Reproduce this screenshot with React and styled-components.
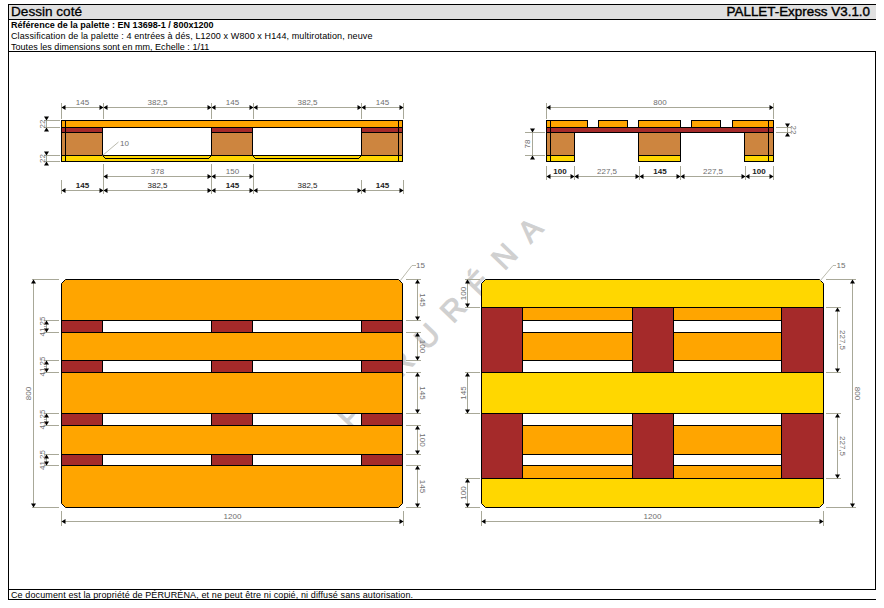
import React from 'react';
import styled, { createGlobalStyle } from 'styled-components';

const GlobalStyle = createGlobalStyle`
  html, body {
    margin: 0;
    padding: 0;
    background: #fff;
  }
`;

const ORANGE = '#ffa500';
const BROWN = '#a52a2a';
const PERU = '#cd853f';
const GOLD = '#ffd700';
const DIM = '#a8a898';

const Page = styled.div`
  width: 868px;
  margin: 4px 0 0 8px;
  font-family: 'Liberation Sans', Arial, sans-serif;
  color: #000;
`;

const TitleBar = styled.header`
  display: flex;
  justify-content: space-between;
  align-items: center;
  height: 14px;
  padding: 0 6px 0 2px;
  background: #e0e0e0;
  border: 1px solid #000;
  border-right: 0;
  line-height: 14px;
`;

const TitleText = styled.span`
  font-size: ${(p) => (p.$right ? '13.4px' : '13.6px')};
  -webkit-text-stroke: ${(p) => (p.$right ? '0.4px' : '0.3px')} #000;
`;

const Info = styled.section`
  display: grid;
  grid-auto-rows: 11px;
  height: 31px;
  padding-left: 2px;
  border-left: 1px solid #000;
  font-size: 9px;
  line-height: 11px;
`;

const InfoRow = styled.div`
  font-weight: ${(p) => (p.$bold ? 700 : 400)};
  letter-spacing: ${(p) => p.$spacing ?? 0}px;
  white-space: nowrap;
`;

const Sheet = styled.main`
  height: 537px;
  border: 1px solid #000;
`;

const Drawing = styled.svg`
  display: block;
  width: 866px;
  height: 537px;
`;

const Footer = styled.footer`
  height: 9px;
  padding-left: 2px;
  border-left: 1px solid #000;
  border-bottom: 1px solid #000;
  font-size: 9px;
  line-height: 10px;
  letter-spacing: 0.115px;
  white-space: nowrap;
`;

const DimLabel = styled.text`
  font-family: 'Liberation Sans', Arial, sans-serif;
  font-size: 8px;
  font-weight: ${(p) => (p.$tone === 'bold' ? 700 : 400)};
  fill: ${(p) => (p.$tone ? '#222' : '#6e6e6e')};
  text-anchor: middle;
  dominant-baseline: central;
`;

const Watermark = styled.text`
  font-family: 'Liberation Sans', Arial, sans-serif;
  font-size: 30px;
  fill: #d0d0d0;
  stroke: #d0d0d0;
  stroke-width: 1;
  letter-spacing: 16px;
  text-anchor: middle;
  dominant-baseline: central;
`;

const Wood = styled.polygon`
  fill: ${(p) => p.$fill};
  stroke: #000;
  stroke-width: 1;
`;

const Piece = styled.rect`
  fill: ${(p) => p.$fill};
  stroke: #000;
  stroke-width: 1;
  shape-rendering: crispEdges;
`;

const Edge = styled.line`
  stroke: #000;
  stroke-width: 1;
  shape-rendering: crispEdges;
`;

const Rule = styled.line`
  stroke: ${DIM};
  stroke-width: 1;
  shape-rendering: crispEdges;
`;

const Leader = styled.polyline`
  fill: none;
  stroke: ${DIM};
  stroke-width: 0.8;
`;

const Head = styled.polygon`
  fill: #000;
`;

// box between two corner points, a bit easier to read than x/y/w/h
const Box = ({ x1, y1, x2, y2, fill }) => (
  <Piece x={x1} y={y1} width={x2 - x1} height={y2 - y1} $fill={fill} />
);

const ArrowH = ({ x, y, dir }) => (
  <Head points={`${x},${y} ${x + dir * 4},${y - 2.5} ${x + dir * 4},${y + 2.5}`} />
);

const ArrowV = ({ x, y, dir }) => (
  <Head points={`${x},${y} ${x - 2.5},${y + dir * 4} ${x + 2.5},${y + dir * 4}`} />
);

const HDim = ({ x1, x2, y, label, top, bottom, lx, tone, ly }) => (
  <g>
    <Rule x1={x1} y1={y} x2={x2} y2={y} />
    <Rule x1={x1} y1={y - top} x2={x1} y2={y + bottom} />
    <Rule x1={x2} y1={y - top} x2={x2} y2={y + bottom} />
    <ArrowH x={x1} y={y} dir={1} />
    <ArrowH x={x2} y={y} dir={-1} />
    <DimLabel x={lx ?? (x1 + x2) / 2} y={ly ?? y - 5.5} $tone={tone}>{label}</DimLabel>
  </g>
);

// from/to: where the extension lines start and end, tx: x of the rotated label
const VDim = ({ x, y1, y2, label, from, to, tx, rot, cy, outer }) => {
  const mid = cy ?? (y1 + y2) / 2;
  return (
    <g>
      <Rule x1={x} y1={outer ? y1 - 3 : y1} x2={x} y2={outer ? y2 + 3 : y2} />
      <Rule x1={from} y1={y1} x2={to} y2={y1} />
      <Rule x1={from} y1={y2} x2={to} y2={y2} />
      <ArrowV x={x} y={y1} dir={outer ? -1 : 1} />
      <ArrowV x={x} y={y2} dir={outer ? 1 : -1} />
      <DimLabel x={tx} y={mid} transform={`rotate(${rot} ${tx} ${mid})`}>{label}</DimLabel>
    </g>
  );
};

const LEFT_X = [61.5, 103.5, 211.5, 253.5, 361.5, 403.5];
const LEFT_W = ['145', '382,5', '145', '382,5', '145'];

const SideLong = () => (
  <g>
    <Box x1={61.5} y1={120.5} x2={402.5} y2={127.5} fill={ORANGE} />
    {[[61.5, 102.5], [211.5, 252.5], [361.5, 402.5]].map(([a, b]) => (
      <g key={a}>
        <Box x1={a} y1={127.5} x2={b} y2={132.5} fill={BROWN} />
        <Box x1={a} y1={132.5} x2={b} y2={155.5} fill={PERU} />
      </g>
    ))}
    <Box x1={61.5} y1={155.5} x2={402.5} y2={161.5} fill={GOLD} />
    <Edge x1={105} y1={158} x2={209} y2={158} />
    <Edge x1={255} y1={158} x2={359} y2={158} />
    <line x1={102.5} y1={155.5} x2={105} y2={158} stroke="#000" />
    <line x1={211.5} y1={155.5} x2={209} y2={158} stroke="#000" />
    <line x1={252.5} y1={155.5} x2={255} y2={158} stroke="#000" />
    <line x1={361.5} y1={155.5} x2={359} y2={158} stroke="#000" />
    <Edge x1={65.5} y1={120.5} x2={65.5} y2={161.5} />
    <Edge x1={398.5} y1={120.5} x2={398.5} y2={161.5} />

    {LEFT_W.map((w, i) => (
      <HDim key={`t${i}`} x1={LEFT_X[i]} x2={LEFT_X[i + 1]} y={107.5} top={5} bottom={11} label={w} />
    ))}
    <HDim x1={103.5} x2={211.5} y={176.5} top={13} bottom={3} label="378" ly={171} />
    <HDim x1={211.5} x2={253.5} y={176.5} top={13} bottom={3} label="150" ly={171} />
    {LEFT_W.map((w, i) => (
      <HDim key={`b${i}`} x1={LEFT_X[i]} x2={LEFT_X[i + 1]} y={190.5} top={11} bottom={3} label={w} tone={w === '145' ? 'bold' : 'dark'} />
    ))}
    <VDim x={46.5} y1={120.5} y2={127.5} from={44} to={60} tx={42} rot={-90} label="22" outer />
    <VDim x={46.5} y1={155.5} y2={161.5} from={44} to={60} tx={42} rot={-90} label="22" outer />
    <Leader points="102.5,155.5 118.5,142" />
    <DimLabel x={124.5} y={143}>10</DimLabel>
  </g>
);

const SideShort = () => (
  <g>
    {[[546.5, 587.5], [598.5, 627.5], [638.5, 680.5], [691.5, 720.5], [732.5, 773.5]].map(([a, b]) => (
      <Box key={a} x1={a} y1={120.5} x2={b} y2={127.5} fill={ORANGE} />
    ))}
    <Box x1={546.5} y1={127.5} x2={773.5} y2={132.5} fill={BROWN} />
    {[[546.5, 574.5], [638.5, 680.5], [744.5, 773.5]].map(([a, b]) => (
      <g key={a}>
        <Box x1={a} y1={132.5} x2={b} y2={155.5} fill={PERU} />
        <Box x1={a} y1={155.5} x2={b} y2={161.5} fill={GOLD} />
      </g>
    ))}
    <Edge x1={550.5} y1={120.5} x2={550.5} y2={161.5} />
    <Edge x1={768.5} y1={120.5} x2={768.5} y2={161.5} />

    <HDim x1={546.5} x2={773.5} y={107.5} top={5} bottom={11} label="800" />
    <VDim x={532.5} y1={132.5} y2={155.5} from={525} to={545} tx={527} rot={-90} label="78" outer />
    <VDim x={787.5} y1={127.5} y2={132.5} from={776} to={791} tx={793} rot={90} label="22" outer />
    <HDim x1={546.5} x2={574.5} y={176.5} top={11} bottom={3} label="100" tone="bold" lx={560} ly={171} />
    <HDim x1={574.5} x2={639.5} y={176.5} top={11} bottom={3} label="227,5" ly={171} />
    <HDim x1={639.5} x2={680.5} y={176.5} top={11} bottom={3} label="145" tone="bold" ly={171} />
    <HDim x1={680.5} x2={745.5} y={176.5} top={11} bottom={3} label="227,5" ly={171} />
    <HDim x1={745.5} x2={773.5} y={176.5} top={11} bottom={3} label="100" tone="bold" lx={759} ly={171} />
  </g>
);

// top boards of the long view, y start/end
const BOARDS = [[320.5, 332.5], [360.5, 372.5], [413.5, 425.5], [454.5, 465.5]];

const TopDeck = () => (
  <g>
    <Wood points="65.5,279.5 398.5,279.5 402.5,283.5 402.5,320.5 61.5,320.5 61.5,283.5" $fill={ORANGE} />
    <Box x1={61.5} y1={332.5} x2={402.5} y2={360.5} fill={ORANGE} />
    <Box x1={61.5} y1={372.5} x2={402.5} y2={413.5} fill={ORANGE} />
    <Box x1={61.5} y1={425.5} x2={402.5} y2={454.5} fill={ORANGE} />
    <Wood points="61.5,465.5 402.5,465.5 402.5,503.5 398.5,507.5 65.5,507.5 61.5,503.5" $fill={ORANGE} />
    {BOARDS.map(([a, b]) =>
      [[61.5, 102.5], [211.5, 252.5], [361.5, 402.5]].map(([l, r]) => (
        <Box key={`${a}-${l}`} x1={l} y1={a} x2={r} y2={b} fill={BROWN} />
      ))
    )}

    <VDim x={33.5} y1={279.5} y2={507.5} from={32} to={59} tx={28.5} rot={-90} label="800" />
    {BOARDS.map(([a, b]) => (
      <VDim key={a} x={46.5} y1={a} y2={b} from={44} to={59} tx={42.5} rot={-90} label="41,25" />
    ))}
    <VDim x={417.5} y1={279.5} y2={320.5} from={406} to={421} tx={422.5} rot={90} label="145" />
    <VDim x={417.5} y1={332.5} y2={360.5} from={406} to={421} tx={422.5} rot={90} label="100" />
    <VDim x={417.5} y1={372.5} y2={413.5} from={406} to={421} tx={422.5} rot={90} label="145" />
    <VDim x={417.5} y1={425.5} y2={454.5} from={406} to={421} tx={422.5} rot={90} label="100" />
    <VDim x={417.5} y1={465.5} y2={507.5} from={406} to={421} tx={422.5} rot={90} label="145" />
    <HDim x1={61.5} x2={403.5} y={521.5} top={11} bottom={4} label="1200" ly={516} />
    <Leader points="400,281 412,265.5 416,265.5" />
    <DimLabel x={420.5} y={265}>15</DimLabel>
  </g>
);

const UNDER_ROWS = [
  [307.5, 320.5],
  [332.5, 360.5],
  [425.5, 454.5],
  [465.5, 478.5],
];

const BottomDeck = () => (
  <g>
    <Wood points="485.5,279.5 819.5,279.5 823.5,283.5 823.5,307.5 481.5,307.5 481.5,283.5" $fill={GOLD} />
    <Box x1={481.5} y1={372.5} x2={823.5} y2={413.5} fill={GOLD} />
    <Wood points="481.5,478.5 823.5,478.5 823.5,503.5 819.5,507.5 485.5,507.5 481.5,503.5" $fill={GOLD} />
    {UNDER_ROWS.map(([a, b]) =>
      [[522.5, 632.5], [673.5, 781.5]].map(([l, r]) => (
        <Box key={`${a}-${l}`} x1={l} y1={a} x2={r} y2={b} fill={ORANGE} />
      ))
    )}
    {[[307.5, 372.5], [413.5, 478.5]].map(([a, b]) =>
      [[481.5, 522.5], [632.5, 673.5], [781.5, 823.5]].map(([l, r]) => (
        <Box key={`${a}-${l}`} x1={l} y1={a} x2={r} y2={b} fill={BROWN} />
      ))
    )}

    <VDim x={467.5} y1={279.5} y2={307.5} from={465} to={480} tx={463} rot={-90} label="100" />
    <VDim x={467.5} y1={372.5} y2={413.5} from={465} to={480} tx={463} rot={-90} label="145" />
    <VDim x={467.5} y1={478.5} y2={507.5} from={465} to={480} tx={463} rot={-90} label="100" />
    <VDim x={837.5} y1={307.5} y2={372.5} from={826} to={841} tx={842.5} rot={90} label="227,5" />
    <VDim x={837.5} y1={413.5} y2={478.5} from={826} to={841} tx={842.5} rot={90} label="227,5" />
    <VDim x={852.5} y1={279.5} y2={507.5} from={826} to={856} tx={857.5} rot={90} label="800" />
    <HDim x1={481.5} x2={823.5} y={521.5} top={11} bottom={4} label="1200" ly={516} />
    <Leader points="820,281 833,265.5 836,265.5" />
    <DimLabel x={841} y={265}>15</DimLabel>
  </g>
);

const App = () => {
  return (
    <>
      <GlobalStyle />
      <Page>
        <TitleBar>
          <TitleText>Dessin coté</TitleText>
          <TitleText $right>PALLET-Express V3.1.0</TitleText>
        </TitleBar>
        <Info>
          <InfoRow $bold $spacing={0.02}>Référence de la palette : EN 13698-1 / 800x1200</InfoRow>
          <InfoRow $spacing={0.11}>Classification de la palette : 4 entrées à dés, L1200 x W800 x H144, multirotation, neuve</InfoRow>
          <InfoRow $spacing={0.03}>Toutes les dimensions sont en mm, Echelle : 1/11</InfoRow>
        </Info>
        <Sheet>
          <Drawing viewBox="9 52 866 537">
            <Watermark x={445.5} y={317} transform="rotate(-46 445.5 317)">PÉRURÉNA</Watermark>
            <SideLong />
            <SideShort />
            <TopDeck />
            <BottomDeck />
          </Drawing>
        </Sheet>
        <Footer>Ce document est la propriété de PÉRURÉNA, et ne peut être ni copié, ni diffusé sans autorisation.</Footer>
      </Page>
    </>
  );
};

export default App;
